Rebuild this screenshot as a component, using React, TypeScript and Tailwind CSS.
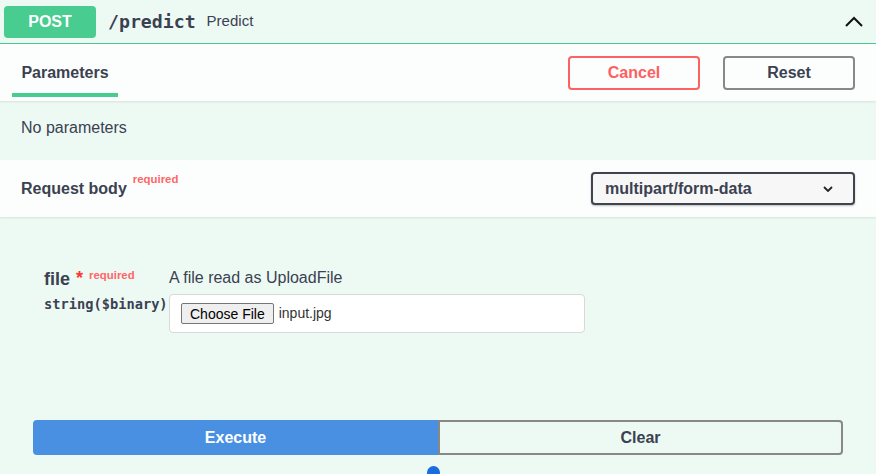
import React from 'react';

const sans = { fontFamily: '"Liberation Sans", Arial, sans-serif' };
const mono = { fontFamily: '"DejaVu Sans Mono", monospace' };

function App() {
    return (
        <div className="w-[876px] h-[474px] overflow-hidden bg-[#edfaf4] text-[#3b4151]" style={sans}>
            {/* summary */}
            <div className="flex items-center h-[44px] border-b border-[#49cc90]">
                <div className="ml-[4px] w-[92px] h-[32px] rounded-[4px] bg-[#49cc90] flex items-center justify-center text-white font-bold text-[16px]">
                    POST
                </div>
                <span className="ml-[12px] font-bold text-[18.2px]" style={mono}>
                    /predict
                </span>
                <span className="ml-[11px] text-[15px]">Predict</span>
                <div className="flex-1" />
                <svg className="mr-[12px]" width="20" height="14" viewBox="0 0 20 14">
                    <polyline points="2,11 10,3 18,11" fill="none" stroke="#111" strokeWidth="2" />
                </svg>
            </div>

            {/* parameters tab */}
            <div className="flex items-center justify-between h-[57px] bg-[#fbfefd] shadow-[0_1px_2px_rgba(0,0,0,0.1)] relative">
                <div className="ml-[12px] w-[106px] h-full flex flex-col">
                    <div className="flex-1 flex items-center justify-center pt-[8px] font-bold text-[16px]">Parameters</div>
                    <div className="h-[4px] mb-[4px] bg-[#49cc90]" />
                </div>
                <div className="flex gap-[23px] mr-[21px]">
                    <button className="w-[132px] h-[34px] rounded-[4px] border-2 border-[#ff6060] text-[#ff6060] font-bold text-[16px]">
                        Cancel
                    </button>
                    <button className="w-[132px] h-[34px] rounded-[4px] border-2 border-[#888] text-[#3b4151] font-bold text-[16px]">
                        Reset
                    </button>
                </div>
            </div>

            <div className="h-[59px] flex items-center pl-[21px] pb-[5px] text-[16px]">No parameters</div>

            {/* request body */}
            <div className="flex items-center justify-between h-[57px] px-[21px] bg-[#fbfefd] shadow-[0_1px_2px_rgba(0,0,0,0.1)] relative">
                <div className="flex items-start font-bold text-[16px]">
                    Request body
                    <span className="ml-[6px] -mt-[6px] text-[11.4px] text-[#ff6666]">required</span>
                </div>
                <div className="w-[264px] h-[33px] rounded-[4px] border-2 border-[#41444e] bg-[#f7f7f7] shadow-[0_1px_2px_rgba(0,0,0,0.25)] flex items-center justify-between pl-[12px] pr-[20px] font-bold text-[16px]">
                    multipart/form-data
                    <svg width="10" height="6" viewBox="0 0 10 6">
                        <polyline points="1,1 5,5 9,1" fill="none" stroke="#222" strokeWidth="1.8" />
                    </svg>
                </div>
            </div>

            {/* file param */}
            <div className="flex mt-[51px] ml-[44px]">
                <div className="w-[125px]">
                    <div className="h-[22px] flex items-center">
                        <span className="font-bold text-[18px]">file</span>
                        <span className="ml-[6px] text-[#ff3333] font-bold text-[18px] leading-none -mt-[3px]">*</span>
                        <span className="ml-[6px] -mt-[7px] text-[11.4px] font-bold text-[#ff6666]">required</span>
                    </div>
                    <div className="mt-[6px] h-[17px] flex items-center font-bold text-[13.7px] text-[#3b4151]" style={mono}>
                        string($binary)
                    </div>
                </div>
                <div>
                    <div className="h-[20px] flex items-center text-[16px]">A file read as UploadFile</div>
                    <div className="mt-[6px] w-[416px] h-[39px] rounded-[4px] border border-[#d9d9d9] bg-white flex items-center pl-[11px] text-[14px]">
                        <button className="h-[21px] px-[8px] bg-[#efefef] border border-[#767676] rounded-[2px] text-black text-[14px] leading-none">
                            Choose File
                        </button>
                        <span className="ml-[5px] text-[#333]">input.jpg</span>
                    </div>
                </div>
            </div>

            {/* execute */}
            <div className="flex px-[33px] mt-[87px]">
                <button className="w-[405px] h-[35px] rounded-l-[4px] bg-[#4990e2] text-white font-bold text-[16px]">Execute</button>
                <button className="w-[405px] h-[35px] rounded-r-[4px] border-2 border-[#888] text-[#3b4151] font-bold text-[16px]">Clear</button>
            </div>
            <div className="ml-[427px] mt-[11px] w-[13px] h-[13px] rounded-full bg-[#1a6de0]" />
        </div>
    );
}

export default App;
